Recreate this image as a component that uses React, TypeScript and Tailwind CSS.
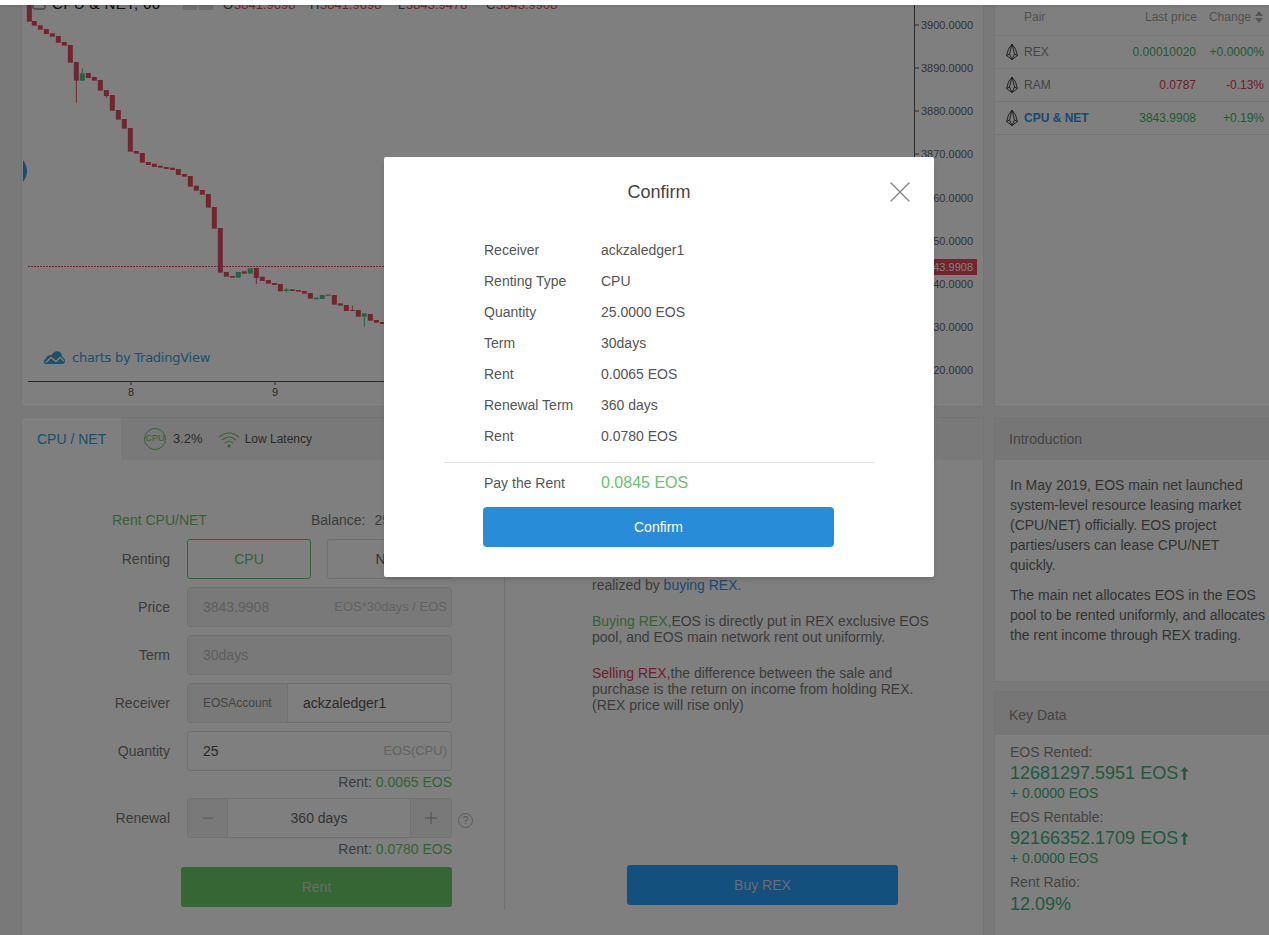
import { Minus, Plus, X } from 'lucide-react'

const RED = '#e14b5e'
const GREEN = '#4cc58a'

// x, open/close top, bottom (zoomed 3x from the chart), up?, wick top, wick bottom
const candles: [number, number, number, boolean?, number?, number?][] = [
  [88, 15, 65], [103, 63, 77], [121, 76, 89], [139, 87, 102], [157, 100, 110], [175, 108, 128],
  [193, 126, 137], [211, 135, 188], [229, 186, 242, false, 186, 308], [247, 220, 242, true, 205, 242],
  [265, 219, 234], [283, 231, 242], [301, 240, 272], [319, 270, 288, false, 270, 293], [337, 285, 332],
  [355, 330, 359], [373, 357, 386], [391, 384, 455], [409, 453, 461], [427, 459, 488], [445, 486, 495],
  [463, 491, 501], [481, 497, 503], [499, 501, 507], [517, 503, 510], [535, 507, 525], [553, 522, 530],
  [571, 528, 560], [589, 557, 572], [607, 570, 584], [625, 582, 623], [643, 621, 686], [661, 684, 818],
  [679, 816, 830], [697, 828, 833], [715, 816, 833, true], [733, 814, 821], [751, 805, 821, true],
  [769, 804, 834, false, 804, 852], [787, 830, 843], [805, 840, 851], [823, 849, 855], [841, 852, 874],
  [859, 868, 873, true, 864, 878], [877, 868, 873], [895, 870, 875], [913, 873, 881], [931, 879, 896],
  [949, 893, 898, true], [967, 885, 897, true], [985, 884, 887], [1003, 885, 914], [1021, 910, 917],
  [1039, 915, 933], [1057, 930, 933, false, 917, 933], [1075, 930, 950], [1093, 940, 950, true, 940, 980],
  [1111, 942, 962], [1129, 960, 968], [1147, 966, 972],
]

const priceTicks = [
  [25, '3900.0000'], [68, '3890.0000'], [111, '3880.0000'], [154, '3870.0000'], [198, '3860.0000'],
  [241, '3850.0000'], [284, '3840.0000'], [327, '3830.0000'], [370, '3820.0000'],
] as const

function Chart() {
  return (
    <svg viewBox="22 0 961 406" className="block w-[961px] h-[406px]" fontFamily="Liberation Sans, Arial, sans-serif">
      <rect x="33" y="-4" width="12" height="13" rx="1.5" fill="none" stroke="#555" />
      <text x="52" y="9" fontSize="15" fill="#222" letterSpacing="0.4">CPU &amp; NET, 60</text>
      <rect x="183" y="2" width="14" height="8" fill="#ddd" />
      <rect x="199" y="2" width="14" height="8" fill="#ddd" />
      <text x="223" y="9" fontSize="13" fill="#555">O</text>
      <text x="234" y="9" fontSize="13" fill={RED}>3841.9698</text>
      <text x="310" y="9" fontSize="13" fill="#555">H</text>
      <text x="320" y="9" fontSize="13" fill={RED}>3841.9698</text>
      <text x="398" y="9" fontSize="13" fill="#555">L</text>
      <text x="406" y="9" fontSize="13" fill={RED}>3843.9478</text>
      <text x="486" y="9" fontSize="13" fill="#555">C</text>
      <text x="496" y="9" fontSize="13" fill={RED}>3843.9908</text>

      <path d="M23 160 Q31 171 23 182 Z" fill="#2f9fd8" />

      <line x1="28" y1="266.5" x2="914" y2="266.5" stroke={RED} strokeDasharray="2 1" />

      {candles.map(([x, top, bottom, up, wickTop, wickBottom]) => {
        const color = up ? GREEN : RED
        return (
          <g key={x} fill={color}>
            {wickTop !== undefined && wickBottom !== undefined && (
              <rect x={x / 3 - 0.5} y={wickTop / 3} width="1" height={(wickBottom - wickTop) / 3} />
            )}
            <rect x={x / 3 - 2.5} y={top / 3} width="5" height={(bottom - top) / 3} />
          </g>
        )
      })}

      <line x1="914.5" y1="0" x2="914.5" y2="381" stroke="#555" />
      <line x1="28" y1="381.5" x2="914" y2="381.5" stroke="#555" />
      <line x1="131" y1="381" x2="131" y2="385" stroke="#555" />
      <line x1="275" y1="381" x2="275" y2="385" stroke="#555" />
      <text x="131" y="396" fontSize="11" fill="#555" textAnchor="middle">8</text>
      <text x="275" y="396" fontSize="11" fill="#555" textAnchor="middle">9</text>

      {priceTicks.map(([y, label]) => (
        <g key={label}>
          <line x1="915" y1={y} x2="919" y2={y} stroke="#555" />
          <text x="921" y={y + 4} fontSize="11" fill="#666">{label}</text>
        </g>
      ))}
      <rect x="916" y="259" width="61" height="16" fill={RED} />
      <text x="921" y="271" fontSize="11" fill="#fff">3843.9908</text>

      <path
        d="M45 364 Q42 361 46 358.5 Q47 354.5 51.5 355 Q55 349.5 60 352 Q62.5 354 62 357 Q65.5 358 65 361.5 Q64.5 364 62 364 Z"
        fill="#3ea0d0"
      />
      <polyline points="46,362.5 51,357.5 56,361.5 60,357.5 64,361" fill="none" stroke="#fff" strokeWidth="1.4" />
      <text x="72" y="362" fontSize="13" fill="#3ea0d0" fontFamily="DejaVu Sans, sans-serif" letterSpacing="-0.25">charts by TradingView</text>
    </svg>
  )
}

function EosLogo() {
  return (
    <svg viewBox="0 0 12 18" className="w-[12px] h-[18px] shrink-0" fill="none" stroke="#444" strokeWidth="1">
      <path d="M6 1 L9.5 6 L11.5 12.5 L6 16.5 L0.5 12.5 L2.5 6 Z" />
      <path d="M6 1 L3.5 11 L6 16.5 L8.5 11 Z" />
      <path d="M0.5 12.5 L3.5 11 M11.5 12.5 L8.5 11" />
    </svg>
  )
}

const pairs = [
  { name: 'REX', price: '0.00010020', change: '+0.0000%', color: 'text-[#3fb56a]' },
  { name: 'RAM', price: '0.0787', change: '-0.13%', color: 'text-[#dc3c5a]' },
  { name: 'CPU & NET', price: '3843.9908', change: '+0.19%', color: 'text-[#3fb56a]', active: true },
]

function PairPanel() {
  return (
    <div className="h-[407px] bg-white border border-t-0 border-r-0 border-[#eaeaea] text-[12px]">
      <div className="h-[36px] flex items-center pb-[2px] border-b border-[#ececec] text-[#a3a3a3]">
        <span className="ml-[29px]">Pair</span>
        <span className="ml-auto text-right">Last price</span>
        <span className="w-[54px] text-right">Change</span>
        <svg viewBox="0 0 8 12" className="w-[8px] h-[12px] ml-[4px] mr-[6px]" fill="#aaa">
          <path d="M4 0 L8 5 H0 Z M0 7 H8 L4 12 Z" />
        </svg>
      </div>
      {pairs.map((p) => (
        <div key={p.name} className="h-[33px] flex items-center border-b border-[#ececec]">
          <span className="ml-[11px] mr-[6px] flex"><EosLogo /></span>
          <span className={p.active ? 'font-bold text-[#3d90d8]' : 'text-[#888]'}>{p.name}</span>
          <span className={`ml-auto ${p.color}`}>{p.price}</span>
          <span className={`w-[68px] mr-[5px] text-right ${p.color}`}>{p.change}</span>
        </div>
      ))}
    </div>
  )
}

function WifiIcon() {
  return (
    <svg viewBox="0 0 22 17" className="w-[22px] h-[17px]" fill="none" stroke="#6fc26f" strokeWidth="1.2">
      <path d="M1 6 Q11 -2 21 6" />
      <path d="M4 9 Q11 3 18 9" />
      <path d="M7 12 Q11 9 15 12" />
      <circle cx="11" cy="15" r="1.6" fill="#6fc26f" stroke="none" />
    </svg>
  )
}

function Label({ children }: { children: React.ReactNode }) {
  return <div className="w-[148px] mr-[17px] text-right text-[#777]">{children}</div>
}

function Row({ label, children }: { label: string; children: React.ReactNode }) {
  return (
    <div className="flex items-center h-[40px]">
      <Label>{label}</Label>
      <div className="w-[265px] h-[40px] flex items-center rounded-[3px] border border-[#e3e3e3] overflow-hidden">
        {children}
      </div>
    </div>
  )
}

function RentForm() {
  return (
    <div className="w-[483px] h-[440px] border-r border-[#e3e3e3] pt-[40px] text-[14px]">
      <div className="flex h-[20px] items-center ml-[90px]">
        <span className="w-[199px] text-[#6fc26f]">Rent CPU/NET</span>
        <span className="text-[#777]">Balance:</span>
        <span className="ml-[9px] text-[#777]">25.4120 EOS</span>
      </div>
      <div className="mt-[9px] flex flex-col gap-[8px]">
        <div className="flex items-center h-[40px]">
          <Label>Renting</Label>
          <div className="w-[124px] h-[40px] rounded-[3px] border border-[#6fc26f] text-[#6fc26f] flex items-center justify-center">CPU</div>
          <div className="w-[125px] h-[40px] ml-[16px] rounded-[3px] border border-[#e3e3e3] text-[#666] flex items-center justify-center">NET</div>
        </div>
        <Row label="Price">
          <div className="w-full h-full bg-[#f2f2f2] flex items-center justify-between pl-[15px] pr-[4px]">
            <span className="text-[#bdbdbd]">3843.9908</span>
            <span className="text-[#c4c4c4] text-[13px]">EOS*30days / EOS</span>
          </div>
        </Row>
        <Row label="Term">
          <div className="w-full h-full bg-[#f2f2f2] flex items-center pl-[15px] text-[#bdbdbd]">30days</div>
        </Row>
        <Row label="Receiver">
          <div className="w-[100px] h-full bg-[#f2f2f2] border-r border-[#e3e3e3] flex items-center pl-[15px] text-[12px] text-[#888]">EOSAccount</div>
          <span className="ml-[15px] text-[#555]">ackzaledger1</span>
        </Row>
        <Row label="Quantity">
          <span className="ml-[15px] text-[#555]">25</span>
          <span className="ml-auto mr-[4px] text-[13px] text-[#c4c4c4]">EOS(CPU)</span>
        </Row>
      </div>
      <div className="h-[27px] w-[430px] flex items-center justify-end text-[#777] pb-[5px]">
        Rent:&nbsp;<span className="text-[#6fc26f]">0.0065 EOS</span>
      </div>
      <div className="flex items-center">
        <Row label="Renewal">
          <div className="w-[40px] h-full bg-[#f2f2f2] border-r border-[#e3e3e3] flex items-center justify-center text-[#8c8c8c]">
            <Minus size={16} strokeWidth={1} />
          </div>
          <span className="flex-1 text-center text-[#666]">360 days</span>
          <div className="w-[41px] h-full bg-[#f2f2f2] border-l border-[#e3e3e3] flex items-center justify-center text-[#8c8c8c]">
            <Plus size={20} strokeWidth={1} />
          </div>
        </Row>
        <div className="ml-[6px] mt-[5px] w-[15px] h-[15px] rounded-full border border-[#b5b5b5] text-[#aaa] text-[10px] flex items-center justify-center">?</div>
      </div>
      <div className="h-[22px] w-[430px] flex items-center justify-end text-[#777]">
        Rent:&nbsp;<span className="text-[#6fc26f]">0.0780 EOS</span>
      </div>
      <button type="button" className="mt-[7px] ml-[159px] w-[271px] h-[40px] rounded-[3px] bg-[#6acc68] text-[#d8d8d8] block">Rent</button>
    </div>
  )
}

function RexInfo() {
  return (
    <div className="flex-1 h-[440px] flex flex-col pl-[87px] pb-[5px] text-[14px] leading-[16px] text-[#777]">
      <div className="w-[345px] pt-[107px]">
        <p>realized by <span className="text-[#3d90d8]">buying REX.</span></p>
        <p className="mt-[20px]"><span className="text-[#6fc26f]">Buying REX,</span>EOS is directly put in REX exclusive EOS pool, and EOS main network rent out uniformly.</p>
        <p className="mt-[20px]"><span className="text-[#dc3c5a]">Selling REX,</span>the difference between the sale and purchase is the return on income from holding REX.<br />(REX price will rise only)</p>
      </div>
      <button type="button" className="mt-auto ml-[35px] w-[271px] h-[40px] rounded-[3px] bg-[#28a0fa] text-[#d8d8d8]">Buy REX</button>
    </div>
  )
}

function TradePanel() {
  return (
    <div className="mt-[10px] h-[600px] bg-white border border-[#eaeaea]">
      <div className="h-[42px] bg-[#f2f2f2] flex items-center">
        <div className="w-[99px] h-full bg-white flex items-center pl-[15px] text-[14px] text-[#2f9fd8]">CPU / NET</div>
        <div className="ml-[23px] w-[22px] h-[22px] rounded-full border border-[#6fc26f] flex items-center justify-center text-[9px] text-[#6fc26f]">CPU</div>
        <span className="ml-[7px] text-[13px] text-[#555]">3.2%</span>
        <span className="ml-[15px] flex"><WifiIcon /></span>
        <span className="ml-[5px] text-[12px] text-[#555]">Low Latency</span>
      </div>
      <div className="flex pt-[10px]">
        <RentForm />
        <RexInfo />
      </div>
    </div>
  )
}

function SidePanels() {
  return (
    <>
      <div className="mt-[10px] h-[265px] bg-white border border-r-0 border-[#eaeaea] text-[14px]">
        <div className="h-[42px] bg-[#ececec] flex items-center pl-[14px] text-[#888]">Introduction</div>
        <div className="pl-[15px] pr-[3px] pt-[15px] leading-[20px] text-[#666]">
          <p>In May 2019, EOS main net launched system-level resource leasing market (CPU/NET) officially. EOS project parties/users can lease CPU/NET quickly.</p>
          <p className="mt-[10px]">The main net allocates EOS in the EOS pool to be rented uniformly, and allocates the rent income through REX trading.</p>
        </div>
      </div>
      <div className="mt-[9px] h-[300px] bg-white border border-r-0 border-[#eaeaea] text-[14px]">
        <div className="h-[43px] bg-[#ececec] flex items-center pl-[14px] pt-[3px] text-[#888]">Key Data</div>
        <div className="pl-[15px] pt-[7px] text-[#888]">
          <Stat label="EOS Rented:" value="12681297.5951 EOS" delta="+ 0.0000 EOS" />
          <div className="mt-[5px]">
            <Stat label="EOS Rentable:" value="92166352.1709 EOS" delta="+ 0.0000 EOS" />
          </div>
          <div className="mt-[5px] leading-[20px]">Rent Ratio:</div>
          <div className="leading-[24px] text-[18px] text-[#45b080]">12.09%</div>
        </div>
      </div>
    </>
  )
}

function Stat({ label, value, delta }: { label: string; value: string; delta: string }) {
  return (
    <div>
      <div className="leading-[20px]">{label}</div>
      <div className="leading-[22px] text-[18px] text-[#45b080] flex items-center">
        {value}
        <svg viewBox="0 0 9 13" className="w-[9px] h-[13px] ml-[2px] mt-[1px]" fill="#45b080">
          <path d="M4.5 0 L8.5 4.5 H5.7 V13 H3.3 V4.5 H0.5 Z" />
        </svg>
      </div>
      <div className="leading-[18px] text-[#45b080]">{delta}</div>
    </div>
  )
}

const confirmRows = [
  ['Receiver', 'ackzaledger1'],
  ['Renting Type', 'CPU'],
  ['Quantity', '25.0000 EOS'],
  ['Term', '30days'],
  ['Rent', '0.0065 EOS'],
  ['Renewal Term', '360 days'],
  ['Rent', '0.0780 EOS'],
]

function ConfirmModal() {
  return (
    <div className="absolute z-20 left-[384px] top-[157px] w-[550px] h-[420px] bg-white rounded-[2px] shadow-md">
      <div className="relative h-[70px] flex items-center justify-center text-[18px] text-[#444]">
        Confirm
        <X size={36} strokeWidth={1} className="absolute right-[16px] top-[17px] text-[#8a8a8a]" />
      </div>
      <div className="pt-[8px] pl-[100px] text-[14px] text-[#555]">
        {confirmRows.map(([label, value], i) => (
          <div key={i} className="h-[31px] flex items-center">
            <span className="w-[117px]">{label}</span>
            <span>{value}</span>
          </div>
        ))}
      </div>
      <div className="mx-[60px] mt-[10px] border-t border-[#e6e6e6]" />
      <div className="h-[40px] pl-[100px] flex items-center text-[14px] text-[#555]">
        <span className="w-[117px]">Pay the Rent</span>
        <span className="text-[16px] text-[#6cc070]">0.0845 EOS</span>
      </div>
      <button type="button" className="ml-[99px] mt-[4px] w-[351px] h-[40px] rounded-[4px] bg-[#288cd9] text-white text-[14px] block">Confirm</button>
    </div>
  )
}

export default function App() {
  return (
    <div className="relative h-[935px] overflow-hidden bg-[#f3f3f3] font-['Liberation_Sans',Arial,sans-serif]">
      <div className="flex gap-[10px] pl-[21px]">
        <div className="w-[963px] shrink-0">
          <div className="h-[407px] bg-white border border-t-0 border-[#eaeaea]">
            <Chart />
          </div>
          <TradePanel />
        </div>
        <div className="w-[275px] shrink-0">
          <PairPanel />
          <SidePanels />
        </div>
      </div>
      <div className="absolute inset-0 z-10 bg-[rgba(0,0,0,0.5)]" />
      <ConfirmModal />
      <div className="absolute z-30 top-0 inset-x-0 h-[5px] bg-white shadow-sm" />
    </div>
  )
}
